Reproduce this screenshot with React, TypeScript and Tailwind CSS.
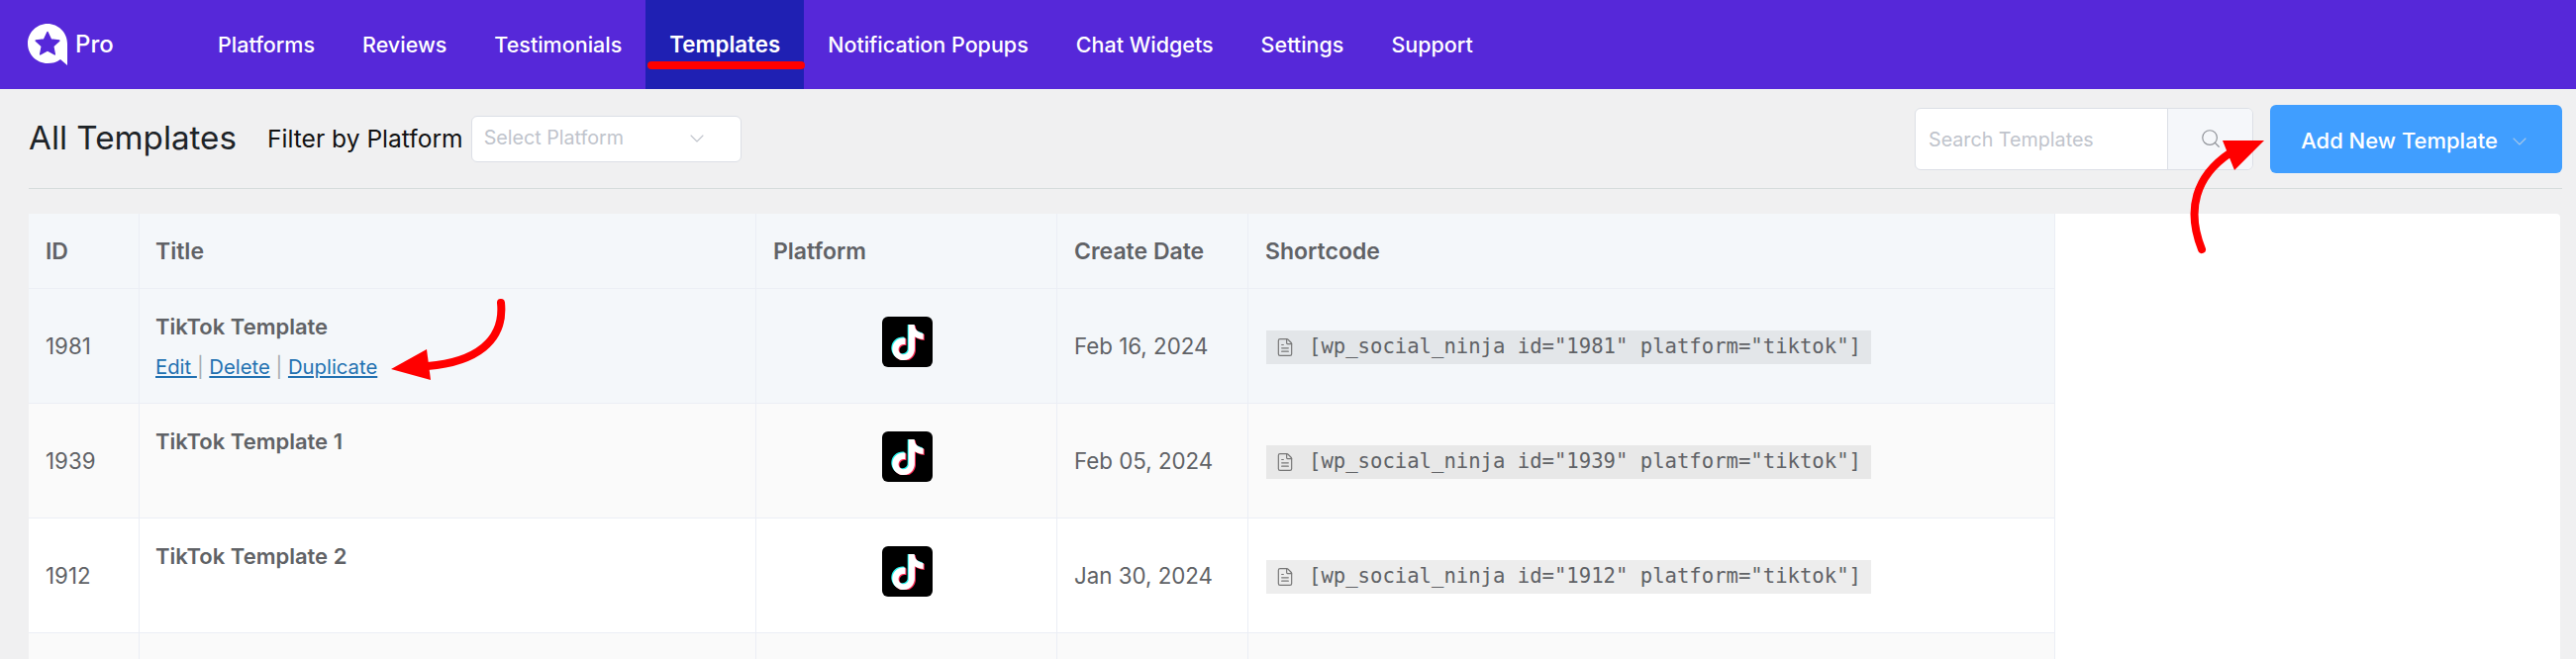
import { ChevronDown, FileText, Search } from "lucide-react";

const font = { fontFamily: "Inter, 'Noto Sans', sans-serif" };
const tiktok =
  "M12.525.02c1.31-.02 2.61-.01 3.91-.02.08 1.53.63 3.09 1.75 4.17 1.12 1.11 2.7 1.62 4.24 1.79v4.03c-1.44-.05-2.89-.35-4.2-.97-.57-.26-1.1-.59-1.62-.93-.01 2.92.01 5.84-.02 8.75-.08 1.4-.54 2.79-1.35 3.94-1.31 1.92-3.58 3.17-5.91 3.21-1.43.08-2.86-.31-4.08-1.03-2.02-1.19-3.44-3.37-3.65-5.71-.02-.5-.03-1-.01-1.49.18-1.9 1.12-3.72 2.58-4.96 1.66-1.44 3.98-2.13 6.15-1.72.02 1.48-.04 2.96-.04 4.44-.99-.32-2.15-.23-3.02.37-.63.41-1.11 1.04-1.36 1.75-.21.51-.15 1.07-.14 1.61.24 1.64 1.82 3.02 3.5 2.87 1.12-.01 2.19-.66 2.77-1.61.19-.33.4-.67.41-1.06.1-1.79.06-3.57.07-5.36.01-4.03-.01-8.05.02-12.07z";

function TikTok() {
  return (
    <div className="mx-auto flex h-[51px] w-[51px] items-center justify-center rounded-[6px] bg-black">
      <svg width="36" height="36" viewBox="0 0 24 24">
        <path d={tiktok} fill="#25f4ee" transform="translate(-0.7 -0.6)" />
        <path d={tiktok} fill="#fe2c55" transform="translate(0.7 0.6)" />
        <path d={tiktok} fill="#ffffff" />
      </svg>
    </div>
  );
}

function Logo() {
  return (
    <svg width="42" height="44" viewBox="0 0 42 44" className="shrink-0">
      <path
        d="M21 1C10 1 1 10 1 21s9 20 20 20c5 0 9-1 13-4l7 6V21C41 10 32 1 21 1z"
        fill="#fff"
      />
      <path
        d="M21 9.5l3.5 7.6 8.3 1-6.1 5.6 1.6 8.2-7.3-4.1-7.3 4.1 1.6-8.2-6.1-5.6 8.3-1z"
        fill="#5628d9"
        stroke="#5628d9"
        strokeWidth="1.5"
        strokeLinejoin="round"
      />
    </svg>
  );
}

const navItems = ["Platforms", "Reviews", "Testimonials", "Templates", "Notification Popups", "Chat Widgets", "Settings", "Support"];

const rows = [
  { id: "1981", title: "TikTok Template", date: "Feb 16, 2024", bg: "bg-[#f4f7fa]", code: "bg-[#e3e6e9]", links: true },
  { id: "1939", title: "TikTok Template 1", date: "Feb 05, 2024", bg: "bg-[#fafafa]", code: "bg-[#e8e8e8]", links: false },
  { id: "1912", title: "TikTok Template 2", date: "Jan 30, 2024", bg: "bg-white", code: "bg-[#ededed]", links: false },
];

const cell = "border-r border-b border-[#ebeef5]";
const link = "text-[#2271b1] underline";

export default function App() {
  return (
    <div style={font} className="relative h-[666px] w-[2602px] overflow-hidden bg-[#f0f0f1]">
      <nav className="flex h-[90px] items-stretch bg-[#5628d9] text-white">
        <div className="flex w-[196px] items-center pl-[27px]">
          <Logo />
          <span className="ml-[7px] text-[24px] font-medium">Pro</span>
        </div>
        {navItems.map((n) => (
          <div
            key={n}
            className={
              "relative flex items-center px-[24px] " +
              (n === "Templates" ? "bg-[#1f20b3] px-[23.5px] text-[22.3px] font-semibold" : "text-[21.5px] font-medium")
            }
          >
            {n}
            {n === "Templates" && (
              <span className="absolute top-[62px] right-[-1px] left-[2px] h-[8px] rounded-full bg-[#ff0000]" />
            )}
          </div>
        ))}
      </nav>

      <div className="mr-[14px] ml-[29px] flex h-[101px] items-center border-b border-[#d6dcdc]">
        <h1 className="text-[33.2px] leading-none font-normal text-[#1d2327]">All Templates</h1>
        <span className="ml-[31px] text-[24.6px] text-[#111]">Filter by Platform</span>
        <div className="ml-[8px] flex h-[47px] w-[273px] items-center justify-between rounded-[6px] border border-[#dcdfe6] bg-white pr-[32px] pl-[12px] text-[19.7px] text-[#c0c4cc]">
          <span>Select Platform</span>
          <ChevronDown size={24} strokeWidth={1.1} />
        </div>
        <div className="ml-auto flex h-[63px] w-[342px] overflow-hidden rounded-[6px] border border-[#dcdfe6] bg-white text-[19.7px] text-[#c0c4cc]">
          <div className="flex flex-1 items-center pt-[3px] pl-[13px]">Search Templates</div>
          <div className="flex w-[86px] items-center justify-center border-l border-[#dcdfe6] bg-[#f5f7fa] text-[#909399]">
            <Search size={22} strokeWidth={1.3} />
          </div>
        </div>
        <button className="ml-[17px] flex h-[69px] w-[295px] items-center justify-center gap-[10px] rounded-[6px] bg-[#409eff] pt-[5px] text-[22px] font-medium text-white">
          Add New Template
          <ChevronDown size={24} strokeWidth={1.1} className="text-[#a8c8e8]" />
        </button>
      </div>

      <div className="mt-[25px] ml-[29px] w-[2557px] rounded-t-[4px] bg-white">
        <table className="w-[2047px] table-fixed border-separate border-spacing-0 text-[22.3px] text-[#606266]">
          <colgroup>
            <col className="w-[112px]" />
            <col className="w-[623px]" />
            <col className="w-[304px]" />
            <col className="w-[193px]" />
            <col className="w-[815px]" />
          </colgroup>
          <thead>
            <tr className="h-[76px] bg-[#f4f7fa] text-left text-[23px]">
              <th className={cell + " pt-[2px] pl-[17px] font-semibold"}>ID</th>
              <th className={cell + " pt-[2px] pl-[16px] font-semibold"}>Title</th>
              <th className={cell + " pt-[2px] pl-[17px] font-semibold"}>Platform</th>
              <th className={cell + " pt-[2px] pl-[17px] font-semibold"}>Create Date</th>
              <th className={cell + " pt-[2px] pl-[17px] font-semibold"}>Shortcode</th>
            </tr>
          </thead>
          <tbody>
            {rows.map((r) => (
              <tr key={r.id} className={"h-[116px] " + r.bg}>
                <td className={cell + " pl-[17px]"}>{r.id}</td>
                <td className={cell + " pt-[24px] pl-[16px] align-top"}>
                  <div className="text-[22px] leading-[28px] font-semibold">{r.title}</div>
                  {r.links && (
                    <div className="mt-[13px] text-[20.3px] leading-[28px] text-[#a7aaad]">
                      <span className={link}>Edit </span> | <span className={link}>Delete</span> | <span className={link}>Duplicate</span>
                    </div>
                  )}
                </td>
                <td className={cell + " pt-[28px] pl-[2px] align-top"}>
                  <TikTok />
                </td>
                <td className={cell + " pl-[17px]"}>{r.date}</td>
                <td className={cell + " pt-[2px] pl-[18px]"}>
                  <div className={"flex h-[34px] w-[611px] items-center pl-[9px] text-[20.6px] whitespace-pre " + r.code} style={{ fontFamily: "'DejaVu Sans Mono', monospace" }}>
                    <FileText size={20} strokeWidth={1.4} className="mr-[14px] shrink-0 text-[#777]" />
                    {`[wp_social_ninja id="${r.id}" platform="tiktok"]`}
                  </div>
                </td>
              </tr>
            ))}
            <tr className="h-[116px] bg-[#fafafa]">
              <td className={cell} />
              <td className={cell} />
              <td className={cell} />
              <td className={cell} />
              <td className={cell} />
            </tr>
          </tbody>
        </table>
      </div>

      <svg className="pointer-events-none absolute top-0 left-0" width="2602" height="666" viewBox="0 0 2602 666">
        <path d="M506 306C510 345 480 366 432 370" fill="none" stroke="#ff0000" strokeWidth="8" strokeLinecap="round" />
        <polygon points="395,373 431,353 435,384" fill="#ff0000" />
        <path d="M2224 252C2208 212 2218 178 2252 155" fill="none" stroke="#ff0000" strokeWidth="8" strokeLinecap="round" />
        <polygon points="2245,142 2287,142 2257,172" fill="#ff0000" />
      </svg>
    </div>
  );
}
